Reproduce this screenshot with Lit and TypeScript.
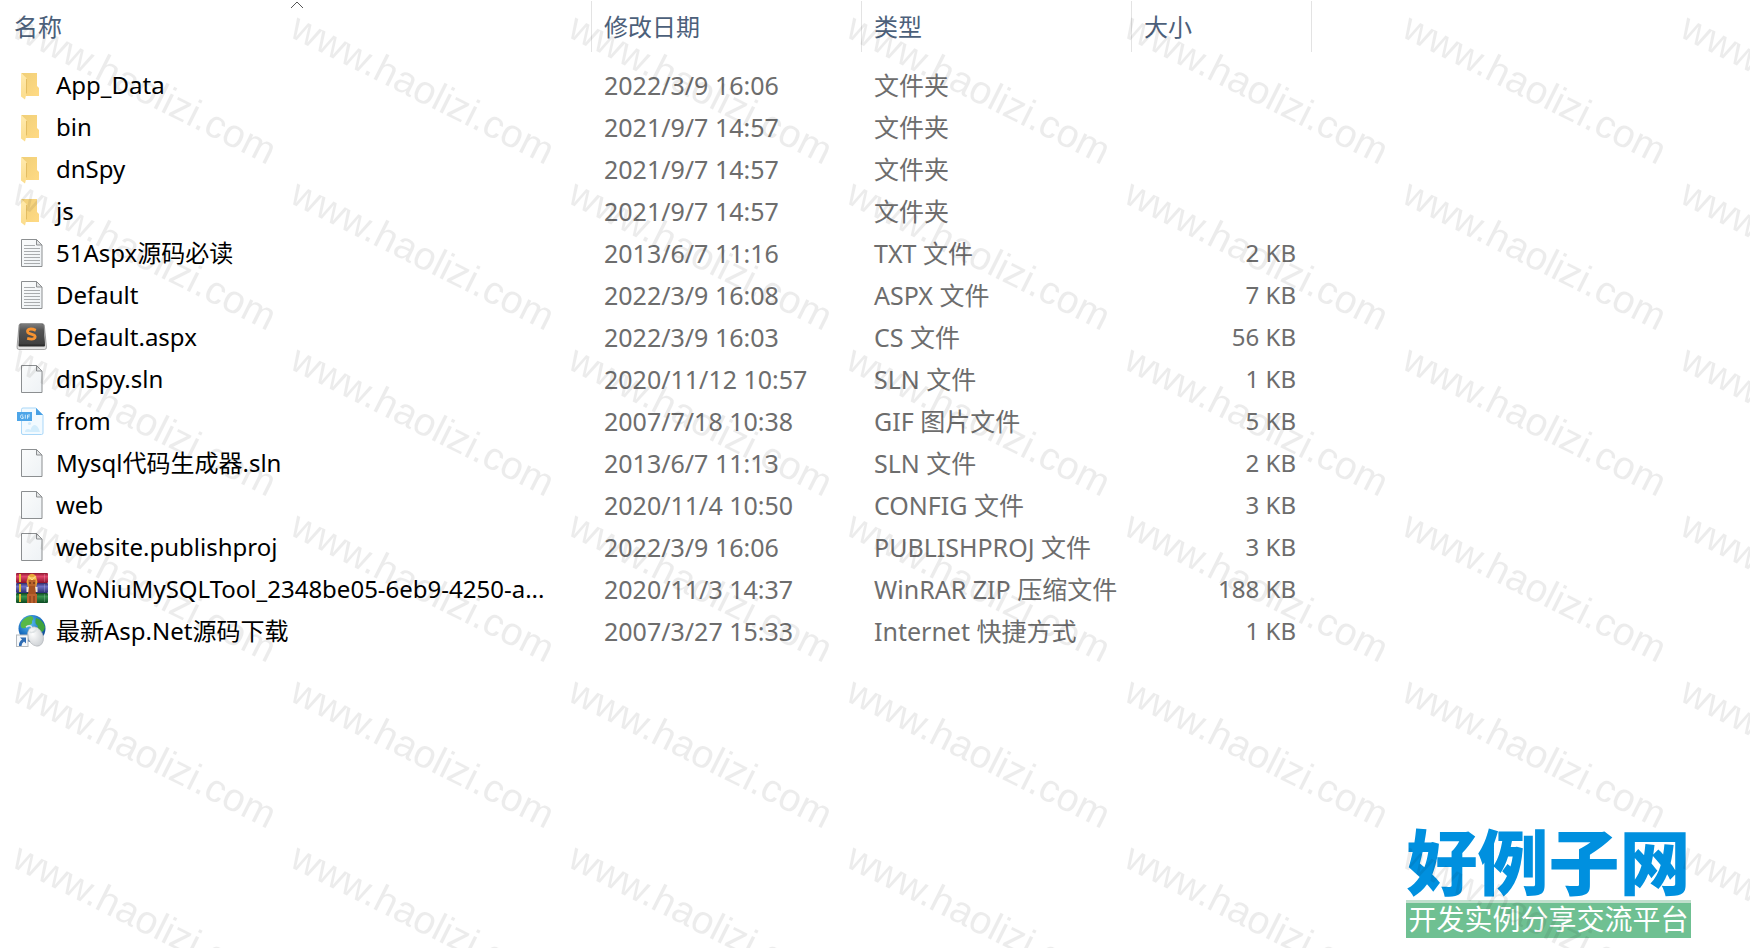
import { LitElement, html, svg, css } from "lit";
import { customElement } from "lit/decorators.js";

type Kind = "folder" | "text" | "blank" | "sublime" | "gif" | "rar" | "link";

interface Entry {
  kind: Kind;
  name: string;
  date: string;
  type: string;
  size?: string;
}

const entries: Entry[] = [
  { kind: "folder", name: "App_Data", date: "2022/3/9 16:06", type: "文件夹" },
  { kind: "folder", name: "bin", date: "2021/9/7 14:57", type: "文件夹" },
  { kind: "folder", name: "dnSpy", date: "2021/9/7 14:57", type: "文件夹" },
  { kind: "folder", name: "js", date: "2021/9/7 14:57", type: "文件夹" },
  { kind: "text", name: "51Aspx源码必读", date: "2013/6/7 11:16", type: "TXT 文件", size: "2 KB" },
  { kind: "text", name: "Default", date: "2022/3/9 16:08", type: "ASPX 文件", size: "7 KB" },
  { kind: "sublime", name: "Default.aspx", date: "2022/3/9 16:03", type: "CS 文件", size: "56 KB" },
  { kind: "blank", name: "dnSpy.sln", date: "2020/11/12 10:57", type: "SLN 文件", size: "1 KB" },
  { kind: "gif", name: "from", date: "2007/7/18 10:38", type: "GIF 图片文件", size: "5 KB" },
  { kind: "blank", name: "Mysql代码生成器.sln", date: "2013/6/7 11:13", type: "SLN 文件", size: "2 KB" },
  { kind: "blank", name: "web", date: "2020/11/4 10:50", type: "CONFIG 文件", size: "3 KB" },
  { kind: "blank", name: "website.publishproj", date: "2022/3/9 16:06", type: "PUBLISHPROJ 文件", size: "3 KB" },
  { kind: "rar", name: "WoNiuMySQLTool_2348be05-6eb9-4250-a...", date: "2020/11/3 14:37", type: "WinRAR ZIP 压缩文件", size: "188 KB" },
  { kind: "link", name: "最新Asp.Net源码下载", date: "2007/3/27 15:33", type: "Internet 快捷方式", size: "1 KB" },
];

const sheet = svg`
  <path d="M5.5 2.5H20.5L26 8V29.5H5.5Z" fill="url(#paper)" stroke="#8c8f91" />
  <path d="M20.5 2.5V8H26Z" fill="#e3e5e6" stroke="#8c8f91" />
`;

const paper = svg`
  <linearGradient id="paper" x1="0" y1="0" x2="1" y2="1">
    <stop offset="0" stop-color="#fbfcfc" /><stop offset="1" stop-color="#eef2f5" />
  </linearGradient>
`;

const icons: Record<Kind, unknown> = {
  folder: svg`
    <defs>
      <linearGradient id="back" x1="0" y1="0" x2="1" y2="1">
        <stop offset="0" stop-color="#f0cf78" /><stop offset="1" stop-color="#ffda84" />
      </linearGradient>
      <linearGradient id="flap" x1="0" y1="0" x2="0" y2="1">
        <stop offset="0" stop-color="#ffeaae" /><stop offset="1" stop-color="#fbdc8b" />
      </linearGradient>
    </defs>
    <path d="M5 4H21V17L23 19V27H10V10Z" fill="url(#back)" />
    <path d="M5 4L10.5 9V24.500L9 30.500L5 27.500Z" fill="url(#flap)" />
    <path d="M10.500 10V24.500" stroke="#e3bd62" stroke-width="1" />
  `,
  text: svg`
    <defs>${paper}</defs>${sheet}
    <path d="M8 8.500H19M8 11.500H24M8 14.500H24M8 17.500H24M8 20.500H24M8 23.500H24M8 26.500H24" stroke="#a9acae" />
  `,
  blank: svg`<defs>${paper}</defs>${sheet}`,
  sublime: svg`
    <defs>
      <linearGradient id="key" x1="0" y1="0" x2="0" y2="1">
        <stop offset="0" stop-color="#7c7c7c" /><stop offset=".3" stop-color="#555" /><stop offset="1" stop-color="#3f3f3f" />
      </linearGradient>
      <linearGradient id="rim" x1="0" y1="0" x2="0" y2="1">
        <stop offset="0" stop-color="#8a8a8a" /><stop offset="1" stop-color="#e8e8e8" />
      </linearGradient>
    </defs>
    <path d="M5 2.500H26Q28 2.500 28.300 4.500L30.500 26Q30.700 28.500 28.500 28.500H3Q.8 28.500 1 26L3 4.500Q3.300 2.500 5 2.500Z" fill="url(#rim)" stroke="#777" stroke-width=".6" />
    <path d="M5.500 3H25.500Q27 3 27.200 4.500L29 24.500Q29 25.500 28 25.500H3.500Q2.500 25.500 2.500 24.500L4 4.500Q4.200 3 5.500 3Z" fill="#2c2c2c" />
    <path d="M5.500 3H25.500Q27 3 27.200 4.500L28.500 22Q28.500 23.500 27 23.500H4.500Q3 23.500 3 22L4 4.500Q4.200 3 5.500 3Z" fill="url(#key)" />
    <path d="M19.800 9.300Q15.500 7.400 13 8.400Q10.700 9.600 12 11.600Q12.800 12.600 16 13.300Q20 14.300 18.900 16.800Q17.500 19 11.200 17.300" fill="none" stroke="#f79331" stroke-width="2.900" />
  `,
  gif: svg`
    <path d="M7 3H20L27 10V28Q27 29.500 25.500 29.500H7Q5.500 29.500 5.500 28V4.500Q5.500 3 7 3Z" fill="#f2faff" stroke="#a9d7f8" />
    <path d="M20 3L27 10H20Z" fill="#489fe3" />
    <circle cx="13.500" cy="18.500" r="1.600" fill="#cfeafc" />
    <path d="M9 27Q9 24 12 24Q13.500 24 14.500 25Q16 20 19 20Q22 20.500 24 27Z" fill="#d3edfc" />
    <rect x="1" y="7" width="15" height="9" fill="#4da5e8" />
    <path d="M7.300 10H5.500Q4.500 10 4.500 11.500T5.500 13.500H7.200V11.800H6M9.300 9.700V13.700M11.500 13.800V10H14M11.500 11.800H13.500" fill="none" stroke="#d9effd" stroke-width=".9" />
  `,
  rar: svg`
    <defs>
      <linearGradient id="red" x1="0" y1="0" x2="0" y2="1"><stop offset="0" stop-color="#8e1730" /><stop offset=".35" stop-color="#e0456b" /><stop offset="1" stop-color="#8a1029" /></linearGradient>
      <linearGradient id="blue" x1="0" y1="0" x2="0" y2="1"><stop offset="0" stop-color="#2f2b69" /><stop offset=".35" stop-color="#6d6fc4" /><stop offset="1" stop-color="#292b70" /></linearGradient>
      <linearGradient id="green" x1="0" y1="0" x2="0" y2="1"><stop offset="0" stop-color="#0d4420" /><stop offset=".35" stop-color="#38944e" /><stop offset="1" stop-color="#0b4a22" /></linearGradient>
    </defs>
    <rect x="0" y="0" width="32" height="10" rx="1" fill="url(#red)" />
    <rect x="0" y="10" width="32" height="10" rx="1" fill="url(#blue)" />
    <rect x="0" y="20" width="32" height="10" rx="1" fill="url(#green)" />
    <path d="M4 1V9M4 11V19M4 21V29" stroke="#e6bf38" stroke-width="2" />
    <path d="M28.500 1V9M28.500 11V19M28.500 21V29" stroke="#fff" stroke-opacity=".2" />
    <path d="M10.500 9L12 3Q16 -1.500 20 3L21.500 9L20 14H12Z" fill="#e9a73a" />
    <path d="M12.500 7H19.500V13H12.500Z" fill="#b9632b" />
    <path d="M12 5H20M12.500 3L16 7L19.500 3" fill="none" stroke="#ffe08c" stroke-width="1" />
    <path d="M13 10H15M17 10H19" stroke="#4a2110" stroke-width="1.200" />
    <path d="M10.500 14H21.500V19H10.500Z" fill="#f2ebe2" />
    <path d="M13 13H19L20 21H12Z" fill="#a55122" />
    <path d="M11 21H21V30H11Z" fill="#bb622e" />
    <path d="M14 23V30M18 23V30" stroke="#7b3514" />
  `,
  link: svg`
    <defs>
      <radialGradient id="sea" cx=".4" cy=".3" r=".8"><stop offset="0" stop-color="#5fc5f5" /><stop offset=".6" stop-color="#1769bd" /><stop offset="1" stop-color="#0b3b82" /></radialGradient>
      <radialGradient id="shell" cx=".4" cy=".3" r=".8"><stop offset="0" stop-color="#fff" /><stop offset="1" stop-color="#c7cbcf" /></radialGradient>
    </defs>
    <circle cx="16" cy="13.500" r="13.500" fill="url(#sea)" />
    <path d="M5 8Q8 2 15 1Q19 3 16 6Q17 10 12 10Q10 14 6 13Q4 12 5 8Z" fill="#58b947" />
    <path d="M20 3Q27 5 29 12Q28 18 24 17Q20 15 22 11Q18 8 20 3Z" fill="#3fa33d" />
    <ellipse cx="19.500" cy="21.500" rx="7.500" ry="10" transform="rotate(-24 19.500 21.500)" fill="url(#shell)" stroke="#aeb3b7" stroke-width=".6" />
    <path d="M13.500 17Q18 19 21.500 13M16 13Q15 9 10 12" fill="none" stroke="#dfe3e5" stroke-width="1.500" />
    <rect x=".5" y="20" width="11.500" height="11.500" fill="#f6f8fa" stroke="#b4b9be" />
    <path d="M4 22.500H10V28.500L8 26.500Q5.500 28 5.500 31H3Q2.500 27 6 24.500Z" fill="#2f6cb3" />
  `,
};

@customElement("file-icon")
export class FileIcon extends LitElement {
  static properties = { kind: { type: String } };
  declare kind: Kind;

  static styles = css`
    :host { display: block; width: 32px; height: 32px; }
    svg { display: block; width: 100%; height: 100%; }
  `;

  render() {
    return html`<svg viewBox="0 0 32 32" aria-hidden="true">${icons[this.kind]}</svg>`;
  }
}

@customElement("site-logo")
export class SiteLogo extends LitElement {
  static styles = css`
    :host { display: block; text-align: center; white-space: nowrap; font-family: "Noto Sans CJK SC", sans-serif; }
    .title { color: #0090df; font-size: 71px; line-height: 84px; font-weight: 900; }
    .slogan {
      padding-bottom: 4px;
      border-top: 3px solid #c1dfcd;
      background: #6fc092;
      color: #fff;
      font-size: 28px;
      line-height: 31px;
    }
  `;

  render() {
    return html`
      <div class="title">好例子网</div>
      <div class="slogan">开发实例分享交流平台</div>
    `;
  }
}

@customElement("app-root")
export class AppRoot extends LitElement {
  static styles = css`
    :host {
      display: block;
      position: relative;
      min-height: 100vh;
      overflow: hidden;
      background: #fff;
      font: 24px/42px "Noto Sans", "Noto Sans CJK SC", sans-serif;
    }
    table { width: 1312px; table-layout: fixed; border-collapse: collapse; }
    .name-col { width: 592px; }
    .wide-col { width: 270px; }
    .size-col { width: 180px; }
    th { height: 64px; padding: 0; vertical-align: top; font-weight: 400; }
    .heading {
      position: relative;
      display: block;
      width: 100%;
      height: 51px;
      margin-top: 1px;
      padding: 0 12px;
      border: 0;
      border-right: 1px solid #e3e3e3;
      background: none;
      color: #4c607a;
      font: inherit;
      text-align: left;
    }
    .first { padding-left: 14px; }
    .caret { position: absolute; top: 0; left: 50%; width: 14px; height: 8px; margin-left: -6px; }
    td { height: 42px; padding: 0 12px; color: #6d6d6d; white-space: nowrap; }
    .name { color: #000; }
    .label { display: flex; gap: 8px; padding-left: 4px; }
    .label file-icon { margin-top: 5px; }
    .detail { font-size: 25px; }
    .size { padding-right: 16px; text-align: right; }
    .logo { position: absolute; right: 59px; bottom: 10px; width: 285px; }
    .watermark { position: absolute; inset: 0; width: 100%; height: 100%; pointer-events: none; }
    .mark { font-family: "Liberation Sans", sans-serif; font-size: 39px; fill: #000; fill-opacity: 0.075; }
  `;

  render() {
    return html`
      <table>
        <colgroup>
          <col class="name-col" /><col class="wide-col" /><col class="wide-col" /><col class="size-col" />
        </colgroup>
        <thead>
          <tr>
            <th scope="col" aria-sort="ascending">
              <button class="heading first">
                名称
                <svg class="caret" viewBox="0 0 14 8" aria-hidden="true">
                  <path d="M1 7L7 1L13 7" fill="none" stroke="#555" />
                </svg>
              </button>
            </th>
            <th scope="col"><button class="heading">修改日期</button></th>
            <th scope="col"><button class="heading">类型</button></th>
            <th scope="col"><button class="heading">大小</button></th>
          </tr>
        </thead>
        <tbody>
          ${entries.map(
            (e) => html`
              <tr>
                <td class="name"><div class="label"><file-icon .kind=${e.kind}></file-icon><span>${e.name}</span></div></td>
                <td class="detail">${e.date}</td>
                <td class="detail">${e.type}</td>
                <td class="size">${e.size ?? ""}</td>
              </tr>
            `,
          )}
        </tbody>
      </table>
      <site-logo class="logo"></site-logo>
      <svg class="watermark" aria-hidden="true">
        <defs>
          <pattern id="tile" y="6" width="278" height="166" patternUnits="userSpaceOnUse">
            <text class="mark" transform="translate(10 30) rotate(26.6)">www.haolizi.com</text>
          </pattern>
        </defs>
        <rect width="100%" height="100%" fill="url(#tile)" />
      </svg>
    `;
  }
}
